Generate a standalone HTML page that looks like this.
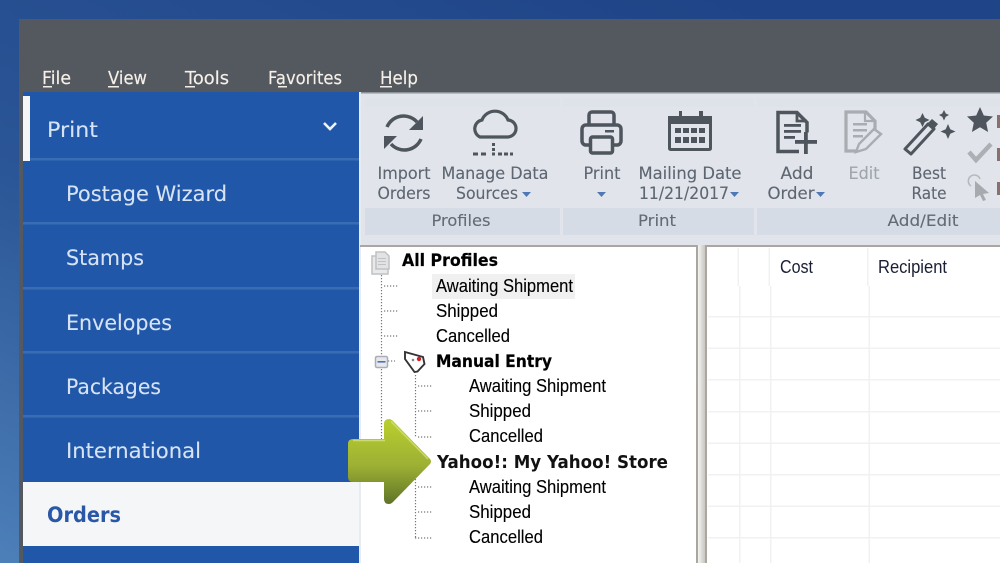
<!DOCTYPE html>
<html><head><meta charset="utf-8"><style>
html,body{margin:0;padding:0;width:1000px;height:563px;overflow:hidden;background:#24488a}
svg{display:block;filter:blur(.35px)}
text{font-family:"DejaVu Sans","Liberation Sans",sans-serif}
.m{fill:#f6f0e9;font-size:18px;stroke:#f6f0e9;stroke-width:.15}
.s{fill:#d6e3f4;font-size:21.500px;stroke:#d6e3f4;stroke-width:.1}
.r{fill:#5d6671;font-size:16.500px;text-anchor:middle;stroke:#5d6671;stroke-width:.12}
.g{fill:#626a75;font-size:16px;text-anchor:middle;stroke:#626a75;stroke-width:.1}
.t{fill:#000;font-family:"Liberation Sans",sans-serif;font-size:18px;stroke:#000;stroke-width:.12}
.b{fill:#000;font-family:"DejaVu Sans",sans-serif;font-weight:bold;font-size:16.500px;stroke:#000;stroke-width:.2}
.i{fill:none;stroke:#4e555d;stroke-width:3.500}
.d{fill:none;stroke:#777;stroke-dasharray:1.200 1.800;stroke-width:1.200}
</style></head><body>
<svg width="1000" height="563" viewBox="0 0 1000 563" xmlns="http://www.w3.org/2000/svg">
<defs>
<linearGradient id="bg" x1="0.75" y1="0" x2="0" y2="1"><stop offset="0" stop-color="#1f4487"/><stop offset="0.55" stop-color="#2a5596"/><stop offset="1" stop-color="#4d7fb9"/></linearGradient>
<linearGradient id="ar" x1="0" y1="0" x2="0" y2="1"><stop offset="0" stop-color="#b9cf2e"/><stop offset="0.55" stop-color="#9db034"/><stop offset="1" stop-color="#5f7428"/></linearGradient>
<linearGradient id="sp" x1="0" y1="0" x2="1" y2="0"><stop offset="0" stop-color="#f4f4f2"/><stop offset="1" stop-color="#c8c6c0"/></linearGradient>
</defs>
<rect width="1000" height="563" fill="url(#bg)"/>
<rect x="19" y="19" width="981" height="544" fill="#54595f"/>

<!-- Menu -->
<text class="m" x="42" y="84" textLength="29" lengthAdjust="spacingAndGlyphs">File</text><rect x="43" y="86" width="9" height="1.500" fill="#f3ede6"/>
<text class="m" x="108" y="84" textLength="39" lengthAdjust="spacingAndGlyphs">View</text><rect x="108" y="86" width="11" height="1.500" fill="#f3ede6"/>
<text class="m" x="185" y="84" textLength="44" lengthAdjust="spacingAndGlyphs">Tools</text><rect x="185" y="86" width="10" height="1.500" fill="#f3ede6"/>
<text class="m" x="268" y="84" textLength="74" lengthAdjust="spacingAndGlyphs">Favorites</text><rect x="278" y="86" width="9" height="1.500" fill="#f3ede6"/>
<text class="m" x="380" y="84" textLength="38" lengthAdjust="spacingAndGlyphs">Help</text><rect x="380" y="86" width="12" height="1.500" fill="#f3ede6"/>

<!-- Sidebar -->
<rect x="23" y="92" width="336" height="471" fill="#2057a8"/>
<rect x="23" y="96" width="7" height="65" fill="#f5f6f7"/>
<rect x="30" y="158" width="329" height="2.500" fill="#3a6cb3"/>
<rect x="23" y="222" width="336" height="2.500" fill="#3a6cb3"/>
<rect x="23" y="287" width="336" height="2.500" fill="#3a6cb3"/>
<rect x="23" y="351" width="336" height="2.500" fill="#3a6cb3"/>
<rect x="23" y="415" width="336" height="2.500" fill="#3a6cb3"/>
<text class="s" x="47" y="137" textLength="51" lengthAdjust="spacingAndGlyphs">Print</text>
<path d="M324 123l6 6 6-6" fill="none" stroke="#f0f4fa" stroke-width="2.600"/>
<text class="s" x="66" y="201" textLength="161" lengthAdjust="spacingAndGlyphs">Postage Wizard</text>
<text class="s" x="66" y="265" textLength="78" lengthAdjust="spacingAndGlyphs">Stamps</text>
<text class="s" x="66" y="330" textLength="106" lengthAdjust="spacingAndGlyphs">Envelopes</text>
<text class="s" x="66" y="394" textLength="95" lengthAdjust="spacingAndGlyphs">Packages</text>
<text class="s" x="66" y="458" textLength="135" lengthAdjust="spacingAndGlyphs">International</text>
<rect x="23" y="482" width="336" height="64" fill="#f5f6f7"/>
<text x="47" y="522" font-size="21.500" font-weight="bold" fill="#2a58a8" textLength="74" lengthAdjust="spacingAndGlyphs">Orders</text>

<!-- Ribbon -->
<rect x="359" y="92" width="641" height="471" fill="#ffffff"/>
<rect x="359" y="92" width="641" height="153" fill="#e1e5eb"/>
<rect x="359" y="92" width="641" height="1.500" fill="#8d9298"/>
<rect x="359" y="92" width="2" height="471" fill="#e8ebef"/>
<rect x="365" y="99" width="195" height="8" fill="#dee2e9"/><rect x="563" y="99" width="191" height="8" fill="#dee2e9"/><rect x="757" y="99" width="243" height="8" fill="#dee2e9"/>
<rect x="365" y="208" width="195" height="27" fill="#d6dce5"/><rect x="563" y="208" width="191" height="27" fill="#d6dce5"/><rect x="757" y="208" width="243" height="27" fill="#d6dce5"/>
<rect x="360" y="245" width="338" height="2" fill="#aba7a0"/><rect x="705" y="245" width="295" height="2" fill="#aba7a0"/>
<text class="g" x="461" y="226" textLength="59" lengthAdjust="spacingAndGlyphs">Profiles</text>
<text class="g" x="657" y="226" textLength="38" lengthAdjust="spacingAndGlyphs">Print</text>
<text class="g" x="923" y="226" textLength="71" lengthAdjust="spacingAndGlyphs">Add/Edit</text>

<!-- Ribbon labels -->
<text class="r" x="404" y="179" textLength="53" lengthAdjust="spacingAndGlyphs">Import</text>
<text class="r" x="404" y="199" textLength="53" lengthAdjust="spacingAndGlyphs">Orders</text>
<text class="r" x="495" y="179" textLength="107" lengthAdjust="spacingAndGlyphs">Manage Data</text>
<text class="r" x="487" y="199" textLength="62" lengthAdjust="spacingAndGlyphs">Sources</text>
<path d="M522 192h9l-4.500 5z" fill="#4f78b4"/>
<text class="r" x="602" y="179" textLength="37" lengthAdjust="spacingAndGlyphs">Print</text>
<path d="M597 192h9l-4.500 5z" fill="#4f78b4"/>
<text class="r" x="690" y="179" textLength="103" lengthAdjust="spacingAndGlyphs">Mailing Date</text>
<text class="r" x="684" y="199" textLength="90" lengthAdjust="spacingAndGlyphs">11/21/2017</text>
<path d="M730 192h9l-4.500 5z" fill="#4f78b4"/>
<text class="r" x="797" y="179" textLength="33" lengthAdjust="spacingAndGlyphs">Add</text>
<text class="r" x="791" y="199" textLength="47" lengthAdjust="spacingAndGlyphs">Order</text>
<path d="M816 192h9l-4.500 5z" fill="#4f78b4"/>
<text class="r" x="864" y="179" textLength="31" lengthAdjust="spacingAndGlyphs" style="fill:#a0a5ab;stroke:#a0a5ab">Edit</text>
<text class="r" x="929" y="179" textLength="34" lengthAdjust="spacingAndGlyphs">Best</text>
<text class="r" x="929" y="199" textLength="35" lengthAdjust="spacingAndGlyphs">Rate</text>

<!-- Refresh icon -->
<path class="i" d="M387 127a18 18 0 0 1 30-5"/><path class="i" d="M421 139a18 18 0 0 1-30 5"/>
<path d="M423 116v14h-14z" fill="#4e555d"/><path d="M384 149v-13h13z" fill="#4e555d"/>

<!-- Cloud icon -->
<path class="i" style="stroke-width:3.200" d="M480 137h27a8.500 8.500 0 0 0 1-17a14 14 0 0 0-26 0a9 9 0 0 0-2 17z"/>
<g fill="#4e555d"><rect x="473" y="152.500" width="5" height="3"/><rect x="481" y="152.500" width="5" height="3"/><rect x="492" y="143" width="3" height="3"/><rect x="492" y="148" width="3" height="3"/><rect x="492" y="152.500" width="3" height="3"/><rect x="498" y="152.500" width="4" height="3"/><rect x="504" y="152.500" width="4" height="3"/><rect x="510" y="152.500" width="3" height="3"/></g>

<!-- Printer -->
<g class="i">
<path d="M589 125v-10a3 3 0 0 1 3-3h19a3 3 0 0 1 3 3v10"/>
<rect x="582" y="125" width="39" height="20" rx="4"/>
<rect x="590.500" y="137" width="22" height="16" rx="2" fill="#e1e5eb"/>
</g>
<rect x="605" y="130" width="9" height="2.500" fill="#4e555d"/>

<!-- Calendar -->
<rect x="669.500" y="117.500" width="41" height="32" rx="1" fill="none" stroke="#4e555d" stroke-width="3"/>
<rect x="668" y="116" width="44" height="8" fill="#4e555d"/>
<rect x="679" y="111" width="3" height="7" fill="#4e555d"/><rect x="699" y="111" width="4" height="7" fill="#4e555d"/>
<g fill="#4e555d"><rect x="675" y="128" width="6" height="5"/><rect x="683" y="128" width="6" height="5"/><rect x="691" y="128" width="6" height="5"/><rect x="699" y="128" width="6" height="5"/><rect x="675" y="137" width="6" height="6"/><rect x="683" y="137" width="6" height="6"/><rect x="691" y="137" width="6" height="6"/><rect x="699" y="137" width="6" height="6"/></g>

<!-- Add order -->
<path class="i" d="M799 151.500h-21v-39h19l10 10v10"/><path d="M797 112v9h10" fill="none" stroke="#4e555d" stroke-width="2.800"/>
<g fill="#4e555d"><rect x="784" y="124" width="17" height="2.800"/><rect x="784" y="130" width="17" height="2.800"/><rect x="784" y="136" width="11" height="2.800"/><rect x="795" y="140" width="22" height="3.800"/><rect x="804" y="132" width="3.800" height="22"/></g>

<!-- Edit -->
<path d="M875 130v-9l-9-9h-20v39h10" fill="none" stroke="#a9adb2" stroke-width="3.200"/>
<path d="M865 113v8h9" fill="none" stroke="#a9adb2" stroke-width="2.200"/>
<g fill="#a9adb2"><rect x="853" y="123" width="14" height="2.500"/><rect x="853" y="129" width="14" height="2.500"/><rect x="853" y="135" width="10" height="2.500"/></g>
<path d="M856 152l3-8 15-15 7 5-15 15z" fill="#e1e5eb" stroke="#a9adb2" stroke-width="2.400"/>

<!-- Wand -->
<path d="M905 149l23-25 6 5-23 25z" fill="none" stroke="#4e555d" stroke-width="3" stroke-linejoin="round"/>
<path d="M927 124l5-5 6 5-5 6z" fill="#4e555d"/>
<path d="M922.500 113l2.300 4.700 4.700 2.300-4.700 2.300-2.300 4.700-2.300-4.700-4.700-2.300 4.700-2.300z" fill="#4e555d"/>
<path d="M944 110l1.800 3.500 3.200 1.500-3.200 1.800-1.800 3.700-1.800-3.700-3.200-1.800 3.200-1.500z" fill="#4e555d"/>
<path d="M948 124l2.300 5.200 5.200 2.300-5.200 2.300-2.300 5.200-2.300-5.200-5.200-2.300 5.200-2.300z" fill="#4e555d"/>

<!-- Right small icons -->
<path d="M980 107l3.800 8.500 9.200 1-6.800 6.200 1.900 9.300-8.100-4.700-8.100 4.700 1.900-9.300-6.800-6.200 9.200-1z" fill="#4e555d"/>
<path d="M969 152l7 8 15-16" fill="none" stroke="#acb0b5" stroke-width="4.500"/>
<path d="M975 181l14 12-6 1 3 6-3 1-3-6-5 3z" fill="#a7abb0"/>
<path d="M971 186a6 6 0 1 1 9-7" fill="none" stroke="#b5b9bd" stroke-width="1.600"/>
<rect x="997" y="115" width="3" height="13" fill="#8a6f6c"/><rect x="997" y="148" width="3" height="13" fill="#8a6f6c"/><rect x="997" y="182" width="3" height="13" fill="#8a6f6c"/>

<!-- Splitter -->
<rect x="696" y="247" width="2" height="316" fill="#aba7a0"/>
<rect x="698" y="245" width="7" height="318" fill="url(#sp)"/>
<rect x="705" y="247" width="2" height="316" fill="#aba7a0"/>

<!-- Grid -->
<g fill="#f1f1f1">
<rect x="708" y="316" width="292" height="1.500"/><rect x="708" y="347.500" width="292" height="1.500"/><rect x="708" y="379" width="292" height="1.500"/><rect x="708" y="411" width="292" height="1.500"/><rect x="708" y="442.500" width="292" height="1.500"/><rect x="708" y="474" width="292" height="1.500"/><rect x="708" y="505.500" width="292" height="1.500"/><rect x="708" y="537" width="292" height="1.500"/>
<rect x="739" y="286" width="1.500" height="277"/><rect x="770" y="286" width="1.500" height="277"/><rect x="868.500" y="286" width="1.500" height="277"/>
<rect x="737.500" y="248" width="1.500" height="38"/><rect x="768.500" y="248" width="1.500" height="38"/><rect x="867" y="248" width="1.500" height="38"/>
</g>
<text x="780" y="273" fill="#1a1f33" style="font-family:'Liberation Sans'" font-size="18" textLength="33" lengthAdjust="spacingAndGlyphs">Cost</text>
<text x="878" y="273" fill="#1a1f33" style="font-family:'Liberation Sans'" font-size="18" textLength="69" lengthAdjust="spacingAndGlyphs">Recipient</text>

<!-- Tree lines -->
<path class="d" d="M381.500 272V355M381.500 369V440M384 286h14M384 311h14M384 336h14M388 361h7M415.500 375V437M418 386h14M418 411h14M418 437h14M415.500 476V538M418 487h14M418 512h14M415 538h17"/>

<!-- Tree icons -->
<path d="M372 256h11l5 4v14h-16z" fill="#e8e9ea" stroke="#bfc1c3" stroke-width="1.500"/>
<path d="M376 252h9l4 4v13h-13z" fill="#e2e3e4" stroke="#bfc1c3" stroke-width="1.500"/>
<g fill="#bfc1c3"><rect x="378" y="258" width="8" height="1"/><rect x="378" y="261" width="8" height="1"/><rect x="378" y="264" width="8" height="1"/></g>
<rect x="375.500" y="356.500" width="12" height="11" rx="1.500" fill="#e6e8ec" stroke="#a9aeb6" stroke-width="1.500"/>
<rect x="377.500" y="361" width="8" height="1.600" fill="#4d6fc0"/>
<path d="M405 352l18 5 1.500 7-7 7.500-3 .5-9.500-13z" fill="#fff" stroke="#333" stroke-width="1.900"/>
<circle cx="419" cy="359" r="2.200" fill="#d0202a"/><circle cx="413" cy="360" r="1.300" fill="#888"/>

<!-- Tree text -->
<rect x="432" y="274" width="143" height="25" fill="#f0f0f0"/>
<text class="b" x="402" y="266" textLength="96" lengthAdjust="spacingAndGlyphs">All Profiles</text>
<text class="t" x="436" y="292" textLength="137" lengthAdjust="spacingAndGlyphs">Awaiting Shipment</text>
<text class="t" x="436" y="317" textLength="62" lengthAdjust="spacingAndGlyphs">Shipped</text>
<text class="t" x="436" y="342" textLength="74" lengthAdjust="spacingAndGlyphs">Cancelled</text>
<text class="b" x="436" y="367" textLength="116" lengthAdjust="spacingAndGlyphs">Manual Entry</text>
<text class="t" x="469" y="392" textLength="137" lengthAdjust="spacingAndGlyphs">Awaiting Shipment</text>
<text class="t" x="469" y="417" textLength="62" lengthAdjust="spacingAndGlyphs">Shipped</text>
<text class="t" x="469" y="442" textLength="74" lengthAdjust="spacingAndGlyphs">Cancelled</text>
<text x="437" y="468" fill="#111" font-size="17.500" font-weight="bold" textLength="231" lengthAdjust="spacingAndGlyphs">Yahoo!: My Yahoo! Store</text>
<text class="t" x="469" y="493" textLength="137" lengthAdjust="spacingAndGlyphs">Awaiting Shipment</text>
<text class="t" x="469" y="518" textLength="62" lengthAdjust="spacingAndGlyphs">Shipped</text>
<text class="t" x="469" y="543" textLength="74" lengthAdjust="spacingAndGlyphs">Cancelled</text>

<!-- Arrow -->
<path d="M353 439H384V424Q384 419 389 419Q391 419 393 421L430 459Q432 461.500 430 464L393 502Q391 504 389 504Q384 504 384 499V482H353Q348 482 348 477V444Q348 439 353 439z" fill="url(#ar)"/>
<path d="M353 440.500H385M391 421.500L428 459" fill="none" stroke="#d3e07c" stroke-width="1.500" opacity=".8"/>
</svg>
</body></html>
